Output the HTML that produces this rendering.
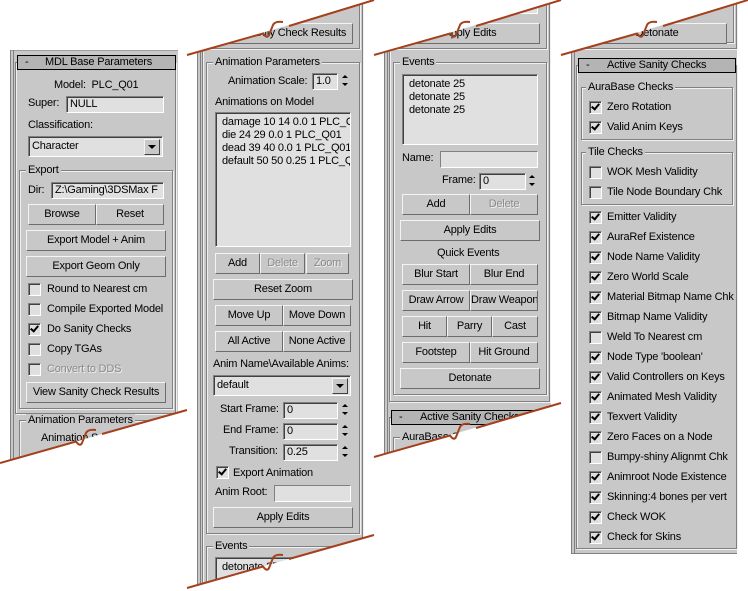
<!DOCTYPE html>
<html style="overflow:hidden;height:591px"><head><meta charset="utf-8"><style>
html,body{overflow:hidden}
body{margin:0;width:748px;height:591px;background:#fff;position:relative;overflow:hidden;font:11px "Liberation Sans",sans-serif;letter-spacing:-0.2px;color:#000}
div{box-sizing:border-box}
.a{position:absolute;white-space:nowrap;line-height:14px}
.p{position:absolute;background:#c8c8c8}
.vl{position:absolute;width:1px;background:#808080}
.b{position:absolute;border:1px solid;border-color:#f4f4f4 #6c6c6c #6c6c6c #f4f4f4;text-align:center;background:#c8c8c8;line-height:18px;white-space:nowrap;overflow:hidden}
.dis{color:#8a8a8a;text-shadow:1px 1px 0 #f0f0f0}
.e{position:absolute;background:#e0e0e0;border:1px solid;border-color:#808080 #fff #fff #808080;box-shadow:inset 1px 1px 0 #404040;padding-left:3px;line-height:13px;white-space:nowrap;overflow:hidden}
.g{position:absolute;border:1px solid #808080;box-shadow:inset 1px 1px 0 #f0f0f0,1px 1px 0 #f0f0f0}
.gl{position:absolute;background:#c8c8c8;padding:0 2px;line-height:13px;white-space:nowrap}
.c{position:absolute;width:13px;height:13px;background:#e0e0e0;border:1px solid;border-color:#808080 #fff #fff #808080;box-shadow:inset 1px 1px 0 #404040}
.k::after{content:"";position:absolute;left:3px;top:0px;width:3px;height:6px;border-right:2px solid #000;border-bottom:2px solid #000;transform:rotate(40deg)}
.t{position:absolute;background:#b4b4b4;border:1px solid #000;line-height:12px;white-space:nowrap}
.dd{position:absolute;right:2px;top:2px;width:16px;height:16px;background:#c8c8c8;border:1px solid;border-color:#f4f4f4 #404040 #404040 #f4f4f4}
.dd::after{content:"";position:absolute;left:3px;top:5px;border-left:4px solid transparent;border-right:4px solid transparent;border-top:4px solid #000}
.sp{position:absolute;width:10px;height:16px}
.sp::before{content:"";position:absolute;left:2px;top:2px;border-left:3px solid transparent;border-right:3px solid transparent;border-bottom:3px solid #000}
.sp::after{content:"";position:absolute;left:2px;top:10px;border-left:3px solid transparent;border-right:3px solid transparent;border-top:3px solid #000}
.lb{position:absolute;background:#e0e0e0;border:1px solid;border-color:#808080 #fff #fff #808080;box-shadow:inset 1px 1px 0 #404040;padding:3px 0 0 6px;line-height:13px;white-space:nowrap;overflow:hidden}
</style></head><body>

<!-- PANEL 1 -->
<div class="p" style="left:10px;top:50px;width:168px;height:450px;border-top:1px solid #a0a0a0"></div>
<div class="vl" style="left:10px;top:50px;height:450px"></div>
<div class="vl" style="left:13px;top:50px;height:450px"></div>
<div class="g" style="left:15px;top:62px;width:161px;height:352px"></div>
<div class="t" style="left:17px;top:55px;width:159px;height:15px"><span style="position:absolute;left:7px">-</span><span style="position:absolute;left:27px">MDL Base Parameters</span></div>
<div class="a" style="left:54px;top:78px">Model:&nbsp; PLC_Q01</div>
<div class="a" style="left:28px;top:96px">Super:</div>
<div class="e" style="left:66px;top:96px;width:98px;height:17px;line-height:15px">NULL</div>
<div class="a" style="left:28px;top:118px">Classification:</div>
<div class="e" style="left:28px;top:136px;width:135px;height:21px;line-height:19px">Character<div class="dd"></div></div>
<div class="g" style="left:19px;top:170px;width:154px;height:239px"></div>
<div class="gl" style="left:26px;top:164px">Export</div>
<div class="a" style="left:28px;top:183px">Dir:</div>
<div class="e" style="left:51px;top:182px;width:113px;height:17px;line-height:15px">Z:\Gaming\3DSMax F</div>
<div class="b" style="left:28px;top:204px;width:68px;height:21px">Browse</div>
<div class="b" style="left:96px;top:204px;width:68px;height:21px">Reset</div>
<div class="b" style="left:26px;top:230px;width:140px;height:21px">Export Model + Anim</div>
<div class="b" style="left:26px;top:256px;width:140px;height:21px">Export Geom Only</div>
<div class="c" style="left:28px;top:283px"></div><div class="a" style="left:47px;top:282px">Round to Nearest cm</div>
<div class="c" style="left:28px;top:303px"></div><div class="a" style="left:47px;top:302px">Compile Exported Model</div>
<div class="c k" style="left:28px;top:323px"></div><div class="a" style="left:47px;top:322px">Do Sanity Checks</div>
<div class="c" style="left:28px;top:343px"></div><div class="a" style="left:47px;top:342px">Copy TGAs</div>
<div class="c" style="left:28px;top:363px"></div><div class="a dis" style="left:47px;top:362px">Convert to DDS</div>
<div class="b" style="left:26px;top:382px;width:140px;height:21px">View Sanity Check Results</div>
<div class="g" style="left:19px;top:420px;width:154px;height:70px"></div>
<div class="gl" style="left:26px;top:414px">Animation Parameters</div>
<div class="a" style="left:41px;top:431px">Animation Scale</div>

<!-- PANEL 2 -->
<div class="p" style="left:197px;top:0;width:166px;height:591px"></div>
<div class="vl" style="left:197px;top:0;height:591px"></div>
<div class="vl" style="left:200px;top:0;height:591px"></div>
<div class="g" style="left:202px;top:-10px;width:161px;height:600px"></div>
<div class="g" style="left:206px;top:-10px;width:154px;height:59px"></div>
<div class="b" style="left:213px;top:23px;width:140px;height:21px">View Sanity Check Results</div>
<div class="g" style="left:206px;top:62px;width:154px;height:472px"></div>
<div class="gl" style="left:213px;top:56px">Animation Parameters</div>
<div class="a" style="left:228px;top:74px">Animation Scale:</div>
<div class="e" style="left:312px;top:73px;width:26px;height:17px;line-height:15px">1.0</div>
<div class="sp" style="left:340px;top:73px"></div>
<div class="a" style="left:215px;top:95px">Animations on Model</div>
<div class="lb" style="left:215px;top:112px;width:136px;height:135px">damage 10 14 0.0 1 PLC_Q01<br>die 24 29 0.0 1 PLC_Q01<br>dead 39 40 0.0 1 PLC_Q01<br>default 50 50 0.25 1 PLC_Q01</div>
<div class="b" style="left:215px;top:253px;width:45px;height:21px">Add</div>
<div class="b dis" style="left:260px;top:253px;width:45px;height:21px">Delete</div>
<div class="b dis" style="left:306px;top:253px;width:43px;height:21px">Zoom</div>
<div class="b" style="left:213px;top:279px;width:140px;height:21px">Reset Zoom</div>
<div class="b" style="left:215px;top:305px;width:68px;height:21px">Move Up</div>
<div class="b" style="left:283px;top:305px;width:68px;height:21px">Move Down</div>
<div class="b" style="left:215px;top:331px;width:68px;height:21px">All Active</div>
<div class="b" style="left:283px;top:331px;width:68px;height:21px">None Active</div>
<div class="a" style="left:213px;top:357px">Anim Name\Available Anims:</div>
<div class="e" style="left:213px;top:375px;width:138px;height:21px;line-height:19px">default<div class="dd"></div></div>
<div class="a" style="left:220px;top:402px">Start Frame:</div>
<div class="e" style="left:283px;top:402px;width:55px;height:17px;line-height:15px">0</div><div class="sp" style="left:340px;top:402px"></div>
<div class="a" style="left:223px;top:423px">End Frame:</div>
<div class="e" style="left:283px;top:423px;width:55px;height:17px;line-height:15px">0</div><div class="sp" style="left:340px;top:423px"></div>
<div class="a" style="left:229px;top:444px">Transition:</div>
<div class="e" style="left:283px;top:444px;width:55px;height:17px;line-height:15px">0.25</div><div class="sp" style="left:340px;top:444px"></div>
<div class="c k" style="left:216px;top:466px"></div><div class="a" style="left:233px;top:466px">Export Animation</div>
<div class="a" style="left:215px;top:485px">Anim Root:</div>
<div class="e" style="left:274px;top:485px;width:77px;height:17px;box-shadow:none"></div>
<div class="b" style="left:213px;top:507px;width:140px;height:21px">Apply Edits</div>
<div class="g" style="left:206px;top:546px;width:154px;height:50px"></div>
<div class="gl" style="left:213px;top:540px">Events</div>
<div class="lb" style="left:215px;top:557px;width:136px;height:34px">detonate 25</div>

<!-- PANEL 3 -->
<div class="p" style="left:384px;top:0;width:167px;height:470px"></div>
<div class="vl" style="left:384px;top:0;height:470px"></div>
<div class="vl" style="left:387px;top:0;height:470px"></div>
<div class="g" style="left:389px;top:-10px;width:161px;height:412px"></div>
<div class="g" style="left:393px;top:-10px;width:154px;height:59px"></div>
<div class="lb" style="left:402px;top:-10px;width:136px;height:24px"></div>
<div class="b" style="left:400px;top:23px;width:140px;height:21px">Apply Edits</div>
<div class="g" style="left:393px;top:62px;width:154px;height:333px"></div>
<div class="gl" style="left:400px;top:56px">Events</div>
<div class="lb" style="left:402px;top:74px;width:136px;height:71px">detonate 25<br>detonate 25<br>detonate 25</div>
<div class="a" style="left:402px;top:151px">Name:</div>
<div class="e" style="left:440px;top:151px;width:98px;height:17px;box-shadow:none"></div>
<div class="a" style="left:442px;top:173px">Frame:</div>
<div class="e" style="left:479px;top:173px;width:47px;height:17px;line-height:15px">0</div><div class="sp" style="left:527px;top:173px"></div>
<div class="b" style="left:402px;top:194px;width:68px;height:21px">Add</div>
<div class="b dis" style="left:470px;top:194px;width:68px;height:21px">Delete</div>
<div class="b" style="left:400px;top:220px;width:140px;height:21px">Apply Edits</div>
<div class="a" style="left:437px;top:246px">Quick Events</div>
<div class="b" style="left:402px;top:264px;width:68px;height:21px">Blur Start</div>
<div class="b" style="left:470px;top:264px;width:68px;height:21px">Blur End</div>
<div class="b" style="left:402px;top:290px;width:68px;height:21px">Draw Arrow</div>
<div class="b" style="left:470px;top:290px;width:68px;height:21px">Draw Weapon</div>
<div class="b" style="left:402px;top:316px;width:45px;height:21px">Hit</div>
<div class="b" style="left:447px;top:316px;width:45px;height:21px">Parry</div>
<div class="b" style="left:492px;top:316px;width:46px;height:21px">Cast</div>
<div class="b" style="left:402px;top:342px;width:68px;height:21px">Footstep</div>
<div class="b" style="left:470px;top:342px;width:68px;height:21px">Hit Ground</div>
<div class="b" style="left:400px;top:368px;width:140px;height:21px">Detonate</div>
<div class="g" style="left:389px;top:417px;width:161px;height:60px"></div>
<div class="t" style="left:391px;top:410px;width:160px;height:15px"><span style="position:absolute;left:7px">-</span><span style="position:absolute;left:28px">Active Sanity Checks</span></div>
<div class="g" style="left:393px;top:437px;width:154px;height:40px"></div>
<div class="gl" style="left:400px;top:431px">AuraBase Checks</div>

<!-- PANEL 4 -->
<div class="p" style="left:571px;top:0;width:166px;height:554px;border-bottom:1px solid #808080"></div>
<div class="vl" style="left:571px;top:0;height:554px"></div>
<div class="vl" style="left:574px;top:0;height:554px"></div>
<div class="g" style="left:576px;top:-10px;width:161px;height:59px"></div>
<div class="g" style="left:580px;top:-10px;width:154px;height:53px"></div>
<div class="b" style="left:587px;top:23px;width:140px;height:21px">Detonate</div>
<div class="g" style="left:576px;top:65px;width:161px;height:484px"></div>
<div class="t" style="left:578px;top:58px;width:158px;height:15px"><span style="position:absolute;left:7px">-</span><span style="position:absolute;left:28px">Active Sanity Checks</span></div>
<div class="g" style="left:581px;top:87px;width:152px;height:53px"></div>
<div class="gl" style="left:586px;top:81px">AuraBase Checks</div>
<div class="g" style="left:581px;top:152px;width:152px;height:53px"></div>
<div class="gl" style="left:586px;top:146px">Tile Checks</div>
<div class="c k" style="left:589px;top:101px"></div><div class="a" style="left:607px;top:100px">Zero Rotation</div>
<div class="c k" style="left:589px;top:121px"></div><div class="a" style="left:607px;top:120px">Valid Anim Keys</div>
<div class="c" style="left:589px;top:166px"></div><div class="a" style="left:607px;top:165px">WOK Mesh Validity</div>
<div class="c" style="left:589px;top:186px"></div><div class="a" style="left:607px;top:185px">Tile Node Boundary Chk</div>
<div class="c k" style="left:589px;top:211px"></div><div class="a" style="left:607px;top:210px">Emitter Validity</div>
<div class="c k" style="left:589px;top:231px"></div><div class="a" style="left:607px;top:230px">AuraRef Existence</div>
<div class="c k" style="left:589px;top:251px"></div><div class="a" style="left:607px;top:250px">Node Name Validity</div>
<div class="c k" style="left:589px;top:271px"></div><div class="a" style="left:607px;top:270px">Zero World Scale</div>
<div class="c k" style="left:589px;top:291px"></div><div class="a" style="left:607px;top:290px">Material Bitmap Name Chk</div>
<div class="c k" style="left:589px;top:311px"></div><div class="a" style="left:607px;top:310px">Bitmap Name Validity</div>
<div class="c" style="left:589px;top:331px"></div><div class="a" style="left:607px;top:330px">Weld To Nearest cm</div>
<div class="c k" style="left:589px;top:351px"></div><div class="a" style="left:607px;top:350px">Node Type 'boolean'</div>
<div class="c k" style="left:589px;top:371px"></div><div class="a" style="left:607px;top:370px">Valid Controllers on Keys</div>
<div class="c k" style="left:589px;top:391px"></div><div class="a" style="left:607px;top:390px">Animated Mesh Validity</div>
<div class="c k" style="left:589px;top:411px"></div><div class="a" style="left:607px;top:410px">Texvert Validity</div>
<div class="c k" style="left:589px;top:431px"></div><div class="a" style="left:607px;top:430px">Zero Faces on a Node</div>
<div class="c" style="left:589px;top:451px"></div><div class="a" style="left:607px;top:450px">Bumpy-shiny Alignmt Chk</div>
<div class="c k" style="left:589px;top:471px"></div><div class="a" style="left:607px;top:470px">Animroot Node Existence</div>
<div class="c k" style="left:589px;top:491px"></div><div class="a" style="left:607px;top:490px">Skinning:4 bones per vert</div>
<div class="c k" style="left:589px;top:511px"></div><div class="a" style="left:607px;top:510px">Check WOK</div>
<div class="c k" style="left:589px;top:531px"></div><div class="a" style="left:607px;top:530px">Check for Skins</div>

<!-- tears -->
<svg style="position:absolute;left:0;top:0" width="748" height="591">
<g fill="#fff">
<polygon points="0,463 187,410 187,591 0,591"/>
<polygon points="187,0 374,0 187,55"/>
<polygon points="187,588 374,535 374,591 187,591"/>
<polygon points="374,0 561,0 374,55"/>
<polygon points="374,457 561,403 561,591 374,591"/>
<polygon points="561,0 748,0 561,55"/>
</g>
<g fill="none" stroke="#a4401c" stroke-width="2">
<path d="M0 463 L76 441.5 Q80 447 82 443 L86 433 Q88 429 96 430 M102 434 L187 410"/>
<path d="M187 55 L263 33.5 Q267 39 269 35 L273 25 Q275 21 283 22 M289 26 L374 0"/>
<path d="M187 588 L263 566.5 Q267 572 269 568 L273 558 Q275 554 283 555 M289 559 L374 535"/>
<path d="M374 55 L450 33.5 Q454 39 456 35 L460 25 Q462 21 470 22 M476 26 L561 0"/>
<path d="M374 457 L450 435.5 Q454 441 456 437 L460 427 Q462 423 470 424 M476 428 L561 403"/>
<path d="M561 55 L637 33.5 Q641 39 643 35 L647 25 Q649 21 657 22 M663 26 L748 0"/>
</g>
</svg>
</body></html>
